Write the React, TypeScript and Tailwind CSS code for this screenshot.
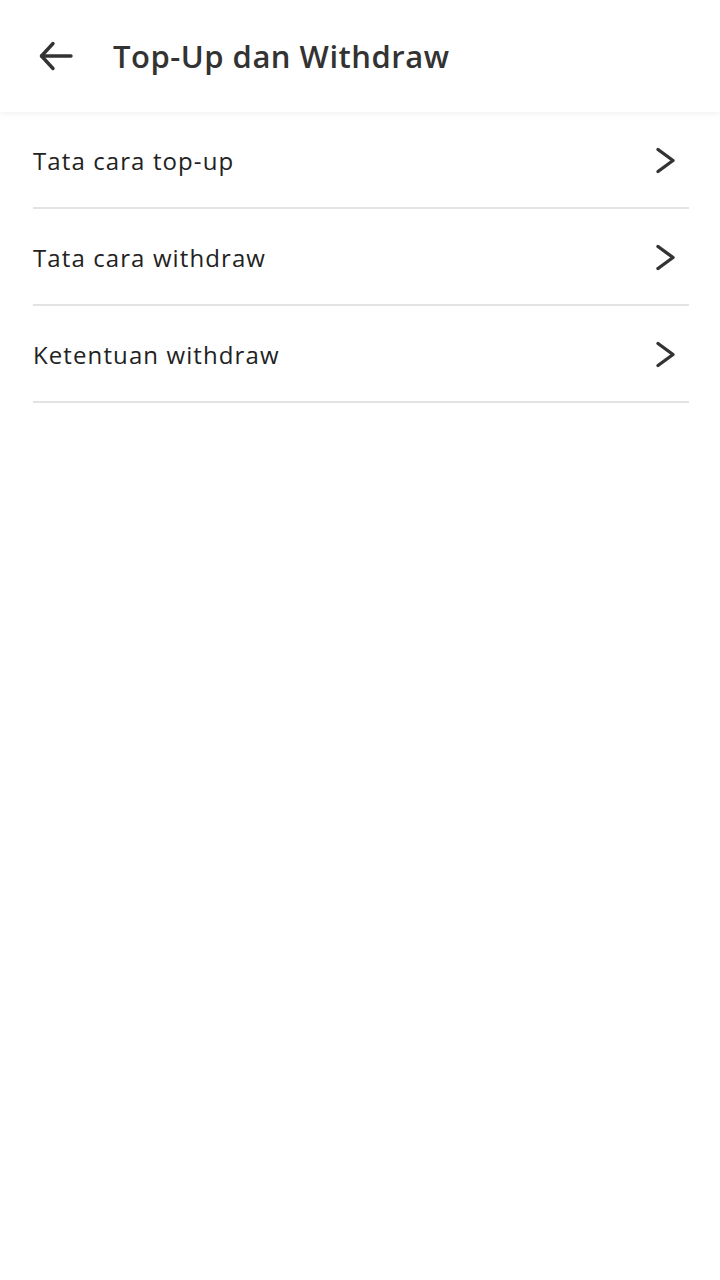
import React from 'react';

const items = ['Tata cara top-up', 'Tata cara withdraw', 'Ketentuan withdraw'];

const ChevronRight = () => (
  <svg width="22" height="30" viewBox="0 0 22 30" fill="none" stroke="#333333" strokeWidth="3.4" strokeLinecap="round" strokeLinejoin="round">
    <polyline points="3,3.5 18,14.5 3,25.5" />
  </svg>
);

const BackArrow = () => (
  <svg width="36" height="32" viewBox="0 0 36 32" fill="none" stroke="#333333" strokeWidth="3.4" strokeLinecap="round" strokeLinejoin="round">
    <line x1="3.5" y1="16" x2="33" y2="16" />
    <polyline points="15,3.5 3.5,16 15,28.5" />
  </svg>
);

export default function App() {
  return (
    <div className="min-h-screen bg-white" style={{ fontFamily: '"Open Sans", sans-serif' }}>
      {/* Header */}
      <header className="h-[112px] flex items-center bg-white shadow-[0_2px_6px_rgba(0,0,0,0.06)] relative">
        <div className="pl-[38px] w-[113px] flex items-center">
          <BackArrow />
        </div>
        <h1 className="text-[31px] font-[550] text-[#333333] tracking-[0.5px]">Top-Up dan Withdraw</h1>
      </header>

      {/* List */}
      <div className="px-[33px] pr-[31px]">
        {items.map((label) => (
          <div key={label} className="h-[97px] pt-[2px] flex items-center justify-between border-b-2 border-[#e3e3e3]">
            <span className="text-[24px] text-[#222222] tracking-[1.1px]">{label}</span>
            <div className="mr-[12px]">
              <ChevronRight />
            </div>
          </div>
        ))}
      </div>
    </div>
  );
}
